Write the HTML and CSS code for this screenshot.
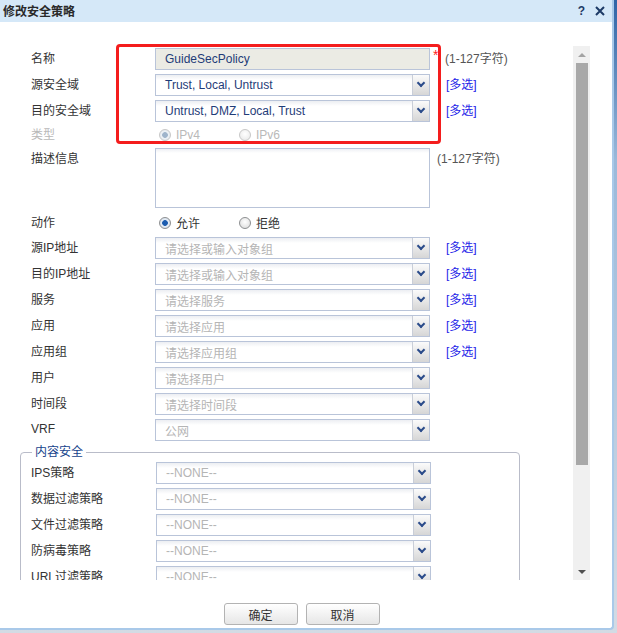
FILE: index.html
```html
<!DOCTYPE html>
<html>
  <head>
    <meta charset="UTF-8" />
    <title>修改安全策略</title>
    <link rel="stylesheet" href="styles.css">
  </head>
  <body>
    <div class="dialog">
      <div class="titlebar">
        <span class="title">修改安全策略</span>
        <span class="tools">
          <span class="help">?</span>
          <svg class="close" width="10" height="10" viewBox="0 0 10 10">
            <path d="M1 1 L9 9 M9 1 L1 9" stroke="#1d3a66" stroke-width="2" fill="none" />
          </svg>
        </span>
      </div>

      <div class="main">
        <div class="form">
          <div class="highlight"></div>

          <div class="row">
            <span class="lbl">名称</span>
            <div class="field readonly"><span class="val">GuideSecPolicy</span></div>
            <span class="req">*</span>
            <span class="hint">(1-127字符)</span>
          </div>
          <div class="row">
            <span class="lbl">源安全域</span>
            <div class="field select"><span class="val">Trust, Local, Untrust</span><span class="drop"></span></div>
            <span class="multi">[多选]</span>
          </div>
          <div class="row">
            <span class="lbl">目的安全域</span>
            <div class="field select"><span class="val">Untrust, DMZ, Local, Trust</span><span class="drop"></span></div>
            <span class="multi">[多选]</span>
          </div>
          <div class="row short disabled">
            <span class="lbl">类型</span>
            <div class="radios">
              <span class="opt"><span class="radio on"></span>IPv4</span>
              <span class="opt"><span class="radio"></span>IPv6</span>
            </div>
          </div>
          <div class="row tall">
            <span class="lbl">描述信息</span>
            <div class="field area"></div>
            <span class="hint near">(1-127字符)</span>
          </div>
          <div class="row action">
            <span class="lbl">动作</span>
            <div class="radios">
              <span class="opt"><span class="radio on"></span>允许</span>
              <span class="opt"><span class="radio"></span>拒绝</span>
            </div>
          </div>
          <div class="row">
            <span class="lbl">源IP地址</span>
            <div class="field select"><span class="val empty">请选择或输入对象组</span><span class="drop"></span></div>
            <span class="multi">[多选]</span>
          </div>
          <div class="row">
            <span class="lbl">目的IP地址</span>
            <div class="field select"><span class="val empty">请选择或输入对象组</span><span class="drop"></span></div>
            <span class="multi">[多选]</span>
          </div>
          <div class="row">
            <span class="lbl">服务</span>
            <div class="field select"><span class="val empty">请选择服务</span><span class="drop"></span></div>
            <span class="multi">[多选]</span>
          </div>
          <div class="row">
            <span class="lbl">应用</span>
            <div class="field select"><span class="val empty">请选择应用</span><span class="drop"></span></div>
            <span class="multi">[多选]</span>
          </div>
          <div class="row">
            <span class="lbl">应用组</span>
            <div class="field select"><span class="val empty">请选择应用组</span><span class="drop"></span></div>
            <span class="multi">[多选]</span>
          </div>
          <div class="row">
            <span class="lbl">用户</span>
            <div class="field select"><span class="val empty">请选择用户</span><span class="drop"></span></div>
          </div>
          <div class="row">
            <span class="lbl">时间段</span>
            <div class="field select"><span class="val empty">请选择时间段</span><span class="drop"></span></div>
          </div>
          <div class="row">
            <span class="lbl">VRF</span>
            <div class="field select"><span class="val empty">公网</span><span class="drop"></span></div>
          </div>

          <fieldset class="group">
            <legend>内容安全</legend>
            <div class="row">
              <span class="lbl">IPS策略</span>
              <div class="field select"><span class="val empty">--NONE--</span><span class="drop"></span></div>
            </div>
            <div class="row">
              <span class="lbl">数据过滤策略</span>
              <div class="field select"><span class="val empty">--NONE--</span><span class="drop"></span></div>
            </div>
            <div class="row">
              <span class="lbl">文件过滤策略</span>
              <div class="field select"><span class="val empty">--NONE--</span><span class="drop"></span></div>
            </div>
            <div class="row">
              <span class="lbl">防病毒策略</span>
              <div class="field select"><span class="val empty">--NONE--</span><span class="drop"></span></div>
            </div>
            <div class="row">
              <span class="lbl">URL过滤策略</span>
              <div class="field select"><span class="val empty">--NONE--</span><span class="drop"></span></div>
            </div>
          </fieldset>
        </div>

        <div class="scrollbar">
          <span class="arrow up"></span>
          <div class="thumb"></div>
          <span class="arrow down"></span>
        </div>
      </div>

      <div class="buttons">
        <button class="btn">确定</button>
        <button class="btn">取消</button>
      </div>
    </div>
  </body>
</html>
```

FILE: styles.css
```css
body {
  margin: 0;
  width: 617px;
  height: 633px;
  overflow: hidden;
  background: linear-gradient(#2f64a6, #9bb9da 160px, #d3dbe4);
  font-family: "Liberation Sans", "Noto Sans CJK SC", sans-serif;
  font-size: 12px;
  color: #333;
}

.dialog {
  width: 612px;
  height: 628px;
  background: #fff;
  border-right: 2px solid #a9c9e9;
  border-bottom: 2px solid #a9c9e9;
  border-bottom-right-radius: 4px;
  display: flex;
  flex-direction: column;
}

.titlebar {
  height: 22px;
  flex: none;
  background: #d5e8f8;
  display: flex;
  align-items: center;
  justify-content: space-between;
  padding-left: 3px;
}

.title {
  font-weight: bold;
  color: #2a2a2a;
  padding-bottom: 2px;
}

.tools {
  display: flex;
  align-items: center;
  gap: 10px;
  margin-right: 7px;
}

.help {
  font-weight: bold;
  color: #1d3a66;
  font-size: 12px;
}

.main {
  display: flex;
  margin-top: 22px;
  height: 536px;
  flex: none;
}

.form {
  position: relative;
  width: 573px;
  overflow: hidden;
  padding-top: 4px;
  box-sizing: border-box;
}

.highlight {
  position: absolute;
  left: 116px;
  top: 0;
  width: 325px;
  height: 100px;
  box-sizing: border-box;
  border: 3px solid #f41d1d;
  border-radius: 4px;
  pointer-events: none;
}

.row {
  display: flex;
  align-items: center;
  height: 22px;
  margin-bottom: 4px;
  padding-left: 31px;
}

.row.short {
  height: 18px;
}

.row.tall {
  height: 60px;
  align-items: flex-start;
}

.row.tall .lbl,
.row.tall .hint {
  padding-top: 1px;
  padding-bottom: 0;
}

.row.action {
  height: 21px;
}

.lbl,
.hint,
.multi {
  padding-bottom: 3px;
}

.lbl {
  width: 124px;
  flex: none;
  color: #333;
}

.disabled .lbl,
.disabled .opt {
  color: #b9b9b9;
}

.field {
  width: 275px;
  height: 22px;
  flex: none;
  box-sizing: border-box;
  border: 1px solid #b9c4d9;
  display: flex;
  align-items: center;
}

.field.area {
  height: 60px;
  background: linear-gradient(#eef0f4, #fff 4px);
}

.readonly {
  background: #ebebe4;
}

.select {
  background: linear-gradient(#eceef2, #fff 5px);
}

.val {
  flex: 1;
  padding-left: 9px;
  white-space: nowrap;
  overflow: hidden;
  color: #1f3c78;
}

.val.empty {
  color: #b5b5b5;
}

.drop {
  width: 17px;
  height: 100%;
  flex: none;
  box-sizing: border-box;
  border-left: 1px solid #c9ced8;
  background: linear-gradient(#fbfbfb, #d6d6d6);
  display: flex;
  align-items: center;
  justify-content: center;
}

.drop::after {
  content: "";
  width: 4px;
  height: 4px;
  border-right: 2px solid #2a4b8a;
  border-bottom: 2px solid #2a4b8a;
  transform: translateY(-2px) rotate(45deg);
}

.req {
  width: 12px;
  padding-left: 3px;
  align-self: flex-start;
  color: #f22;
  font-size: 14px;
  line-height: 14px;
}

.hint {
  color: #555;
}

.hint.near {
  margin-left: 7px;
}

.multi {
  margin-left: 16px;
  color: #2424e8;
}

.radios {
  display: flex;
  padding-left: 4px;
}

.opt {
  display: flex;
  align-items: center;
  width: 80px;
  color: #333;
}

.radio {
  width: 12px;
  height: 12px;
  margin-right: 5px;
  border-radius: 50%;
  box-sizing: border-box;
  border: 1px solid #8d8f91;
  background: radial-gradient(circle at 50% 40%, #fff, #d8d8d8);
}

.radio.on {
  background: radial-gradient(circle, #1b5cb0 0, #1b5cb0 2.5px, #e7eef7 3.2px, #c8d4e2 100%);
}

.disabled .radio {
  border-color: #c7c7c7;
  background: radial-gradient(circle at 50% 40%, #fff, #e6e6e6);
}

.disabled .radio.on {
  background: radial-gradient(circle, #9fb4cb 0, #9fb4cb 2.5px, #eef2f6 3.2px, #dde3ea 100%);
}

.group {
  margin: 0 0 0 20px;
  width: 500px;
  min-width: 0;
  box-sizing: border-box;
  border: 1px solid #b9bcc9;
  border-radius: 4px;
  padding: 3px 0 0 0;
}

.group legend {
  margin-left: 11px;
  padding: 0 3px;
  line-height: 14px;
  color: #15428b;
}

.group .row {
  padding-left: 10px;
}

.group .lbl {
  width: 125px;
}

.scrollbar {
  width: 17px;
  height: 534px;
  margin-top: 2px;
  background: #f0f0f0;
  display: flex;
  flex-direction: column;
  align-items: center;
}

.arrow {
  height: 17px;
  width: 17px;
  display: flex;
  align-items: center;
  justify-content: center;
}

.arrow::after {
  content: "";
  width: 0;
  height: 0;
  border-left: 4px solid transparent;
  border-right: 4px solid transparent;
}

.arrow.up::after {
  border-bottom: 4px solid #a3a3a3;
}

.arrow.down {
  margin-top: auto;
}

.arrow.down::after {
  border-top: 4px solid #505050;
}

.thumb {
  width: 12px;
  height: 402px;
  background: #a8a8a8;
}

.buttons {
  display: flex;
  justify-content: center;
  gap: 8px;
  margin-top: 23px;
  padding-right: 9px;
}

.btn {
  width: 74px;
  height: 22px;
  border: 1px solid #b3b3b3;
  border-radius: 3px;
  background: linear-gradient(#fff, #e6e6e6);
  font: inherit;
  color: #333;
  padding: 0;
}
```
